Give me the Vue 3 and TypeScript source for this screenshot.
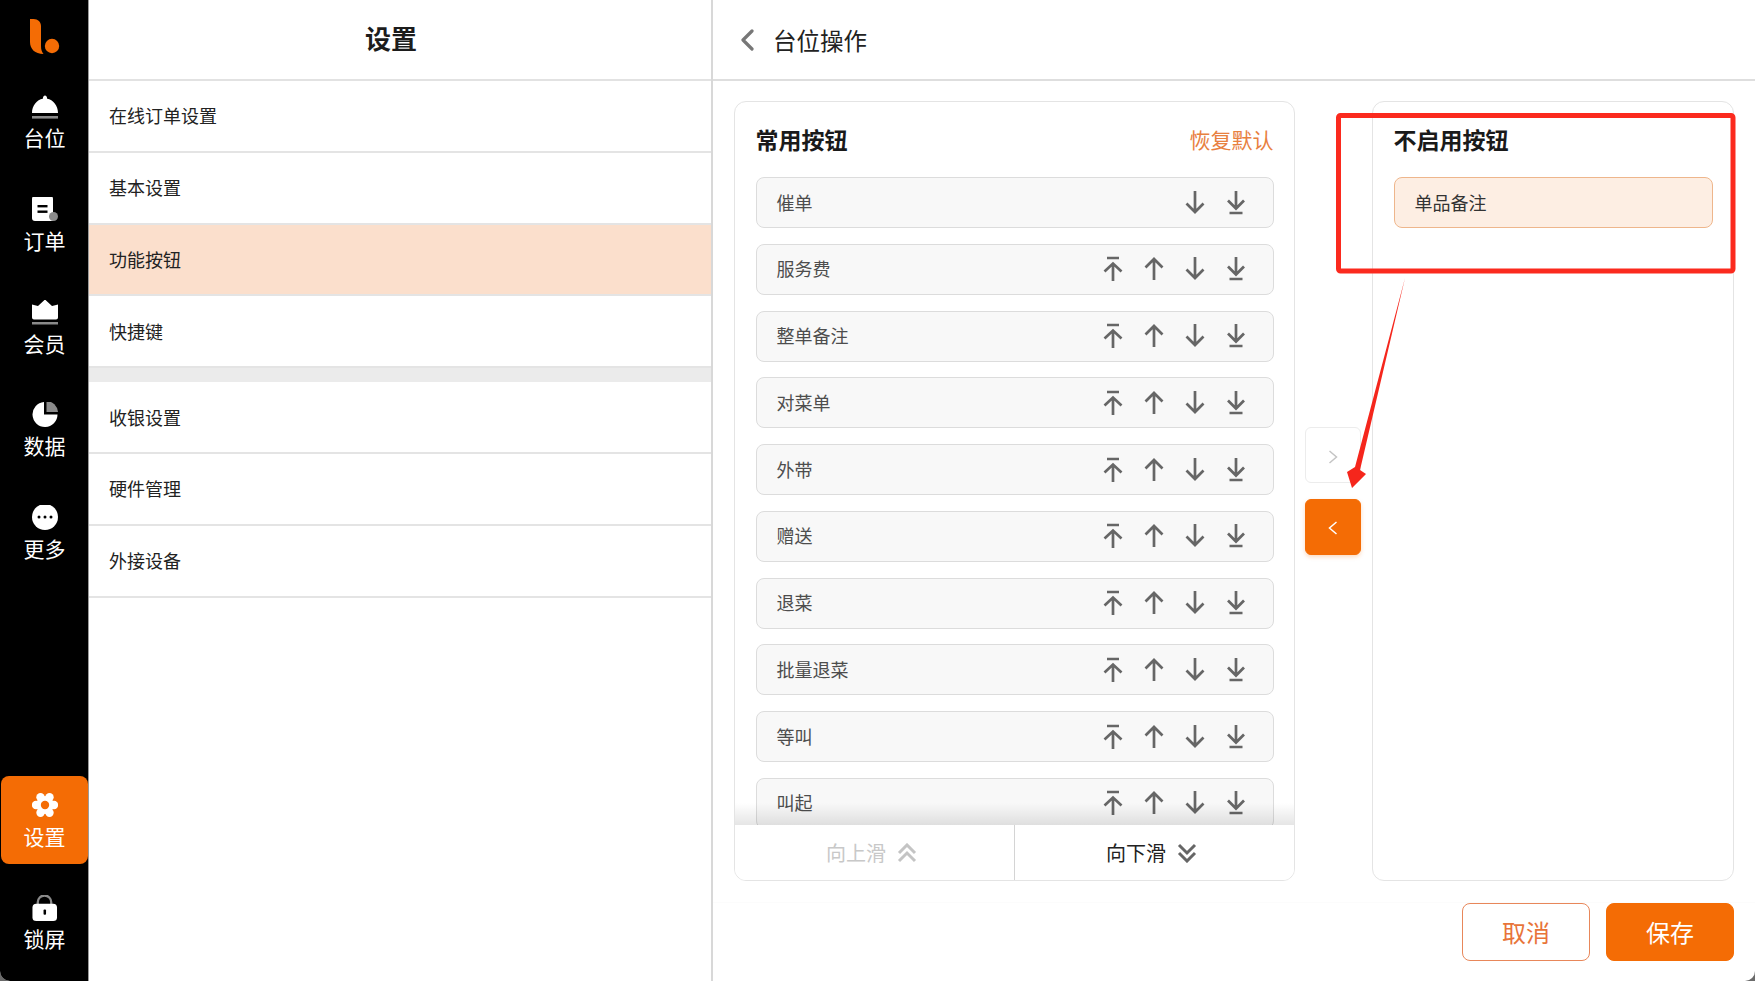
<script setup lang="ts">
const nav = ['bell', 'order', 'crown', 'pie', 'more'] as const
const navLabels: Record<string, string> = {
  bell: '台位', order: '订单', crown: '会员', pie: '数据', more: '更多', gear: '设置', lock: '锁屏'
}
const navBox: Record<string, string> = {
  bell: '0 0 26 26', order: '0 1 26 26', crown: '0 1.500 26 26', pie: '0 1.500 26 26', more: '0 1 26 26'
}
const menuA = ['在线订单设置', '基本设置', '功能按钮', '快捷键']
const menuB = ['收银设置', '硬件管理', '外接设备']
const rows = ['催单', '服务费', '整单备注', '对菜单', '外带', '赠送', '退菜', '批量退菜', '等叫', '叫起']
const lobes = [[22, 13], [17.500, 20.800], [8.500, 20.800], [4, 13], [8.500, 5.200], [17.500, 5.200]]
</script>

<template>
  <div class="app">
    <aside class="side">
      <div class="logo">
        <svg width="30" height="35" viewBox="0 0 30 35">
          <path d="M0 0h3.500C8 0 11 3 11 7v20c0 4 1 6 2.500 8C5 35 0 30 0 23z" fill="#f46c05" />
          <circle cx="22" cy="27" r="7.200" fill="#f46c05" />
        </svg>
      </div>
      <div class="nav-top">
        <div v-for="n in nav" :key="n" class="nav-item">
          <svg class="nav-icon" width="26" height="26" :viewBox="navBox[n]">
            <template v-if="n === 'bell'">
              <path d="M0 19C0 11.500 5 5.800 10.800 4.800 11 2.500 12 1.500 13 1.500s2 1 2.200 3.300C21 5.800 26 11.500 26 19z" fill="#fff" />
              <rect y="22" width="26" height="2.600" fill="#8a8a8a" />
            </template>
            <template v-else-if="n === 'order'">
              <path d="M3 0h15a3 3 0 0 1 3 3v22H3a3 3 0 0 1-3-3V3a3 3 0 0 1 3-3z" fill="#fff" />
              <circle cx="21.500" cy="20.500" r="4.500" fill="#8a8a8a" />
              <rect x="5.500" y="9" width="10" height="2.400" fill="#000" />
              <rect x="5.500" y="14.500" width="10" height="2.400" fill="#000" />
            </template>
            <template v-else-if="n === 'crown'">
              <path d="M0 6l6 1.500L13 1l7 6.500L26 6v13a2 2 0 0 1-2 2H2a2 2 0 0 1-2-2z" fill="#fff" />
              <rect y="23.500" width="26" height="2.500" fill="#8a8a8a" />
            </template>
            <template v-else-if="n === 'pie'">
              <path d="M12 1.500A12.500 12.500 0 1 0 25.500 14H12z" fill="#fff" />
              <path d="M14.500 0.500A12 12 0 0 1 26 11.500H14.500z" fill="#8a8a8a" />
            </template>
            <template v-else>
              <circle cx="13" cy="13" r="13" fill="#fff" />
              <circle cx="7" cy="13" r="1.500" fill="#000" />
              <circle cx="13" cy="13" r="1.500" fill="#000" />
              <circle cx="19" cy="13" r="1.500" fill="#000" />
            </template>
          </svg>
          <span class="nav-label">{{ navLabels[n] }}</span>
        </div>
      </div>
      <div class="nav-bottom">
        <div class="nav-item active">
          <svg class="nav-icon" width="26" height="26" viewBox="0 0 26 26">
            <circle v-for="(l, i) in lobes" :key="i" :cx="l[0]" :cy="l[1]" r="4.200" fill="#fff" />
            <circle cx="13" cy="13" r="9" fill="#fff" />
            <circle cx="13" cy="13" r="4.200" fill="#f46c05" />
          </svg>
          <span class="nav-label">{{ navLabels.gear }}</span>
        </div>
        <div class="nav-item">
          <svg class="nav-icon" width="27" height="26" viewBox="0 0 27 27">
            <path d="M6.500 11V7.500a7 7 0 0 1 14 0V11" fill="none" stroke="#8a8a8a" stroke-width="2.400" />
            <rect x="1" y="9" width="25.500" height="18" rx="4" fill="#fff" />
            <rect x="12.500" y="15" width="2.600" height="5.500" rx="1" fill="#000" />
          </svg>
          <span class="nav-label">{{ navLabels.lock }}</span>
        </div>
      </div>
    </aside>

    <section class="menu">
      <header class="menu-head">设置</header>
      <div v-for="(m, i) in menuA" :key="m" class="menu-row" :class="{ on: i === 2 }">{{ m }}</div>
      <div class="menu-gap"></div>
      <div v-for="m in menuB" :key="m" class="menu-row">{{ m }}</div>
    </section>

    <main class="detail">
      <header class="detail-head">
        <svg width="14" height="22" viewBox="0 0 14 22">
          <path d="M12 2L3 11l9 9" fill="none" stroke="#777" stroke-width="3.200" stroke-linecap="round" stroke-linejoin="round" />
        </svg>
        <span>台位操作</span>
      </header>
      <div class="columns">
        <section class="card used">
          <div class="card-title">
            <h2>常用按钮</h2>
            <span class="reset">恢复默认</span>
          </div>
          <div class="list">
            <div v-for="(r, i) in rows" :key="r" class="row">
              <span>{{ r }}</span>
              <div class="ops">
                <template v-if="i > 0">
                  <svg width="24" height="26" viewBox="0 0 24 26" class="op">
                    <path d="M6 3h12M12 26V9M3.500 16.500L12 8.500l8.500 8" />
                  </svg>
                  <svg width="24" height="26" viewBox="0 0 24 26" class="op">
                    <path d="M12 25V4M3.500 12.500L12 4l8.500 8.500" />
                  </svg>
                </template>
                <svg width="24" height="26" viewBox="0 0 24 26" class="op">
                  <path d="M12 2v21M3.500 14.500L12 23l8.500-8.500" />
                </svg>
                <svg width="24" height="26" viewBox="0 0 24 26" class="op">
                  <path d="M12 2v17M4 11.500l8 8 8-8M5.500 24h13" />
                </svg>
              </div>
            </div>
            <div class="fade"></div>
          </div>
          <div class="scroll-bar">
            <div class="scroll-btn off">
              <span>向上滑</span>
              <svg width="20" height="20" viewBox="0 0 20 20" class="chev">
                <path d="M2 10l8-8 8 8M2 18l8-8 8 8" />
              </svg>
            </div>
            <div class="scroll-btn">
              <span>向下滑</span>
              <svg width="20" height="20" viewBox="0 0 20 20" class="chev">
                <path d="M2 2l8 8 8-8M2 10l8 8 8-8" />
              </svg>
            </div>
          </div>
        </section>

        <div class="move">
          <button class="move-btn">
            <svg width="10" height="14" viewBox="0 0 10 14"><path d="M1.500 1L8.500 7l-7 6" fill="none" stroke="#c4c4c4" stroke-width="1.500" /></svg>
          </button>
          <button class="move-btn on">
            <svg width="10" height="14" viewBox="0 0 10 14"><path d="M8.500 1L1.500 7l7 6" fill="none" stroke="#fff" stroke-width="1.500" /></svg>
          </button>
        </div>

        <section class="card unused">
          <div class="card-title"><h2>不启用按钮</h2></div>
          <div class="picked">单品备注</div>
        </section>
      </div>
      <footer class="foot">
        <button class="btn ghost">取消</button>
        <button class="btn solid">保存</button>
      </footer>
    </main>

    <svg class="marks" width="1755" height="981" viewBox="0 0 1755 981">
      <rect x="1338.500" y="115.500" width="394.500" height="155.500" rx="2" fill="none" stroke="#fb2a1e" stroke-width="5" />
      <path d="M1405 278L1360 470L1366 474L1352 488L1347 472L1355 467Z" fill="#f5261c" />
    </svg>
  </div>
</template>

<style>
html, body { margin: 0; background: #6a6a6a; }
</style>

<style scoped>
.app {
  position: relative;
  display: flex;
  width: 1755px;
  height: 981px;
  overflow: hidden;
  border-radius: 0 0 10px 10px;
  background: #fff;
  font-family: "Noto Sans CJK SC", "Liberation Sans", sans-serif;
  color: #222;
}
.side {
  flex: 0 0 88px;
  display: flex;
  flex-direction: column;
  background: #000;
  color: #fff;
}
.logo {
  height: 78px;
  box-sizing: border-box;
  padding: 19px 0 0 30px;
}
.logo svg { display: block; }
.nav-top { display: flex; flex-direction: column; gap: 14.750px; }
.nav-bottom { margin-top: auto; display: flex; flex-direction: column; gap: 15px; padding-bottom: 14px; }
.nav-item {
  height: 88px;
  box-sizing: border-box;
  padding-top: 16px;
  display: flex;
  flex-direction: column;
  align-items: center;
  border-radius: 8px;
  margin-left: 1px;
}
.nav-item.active { background: #f46c05; }
.nav-icon { display: block; flex: none; }
.nav-label {
  font-size: 21px;
  line-height: 28px;
  margin-top: 3px;
}
.active .nav-label { margin-top: 4px; }
.menu {
  flex: 0 0 625px;
  border-left: 1px solid #9a9a9a;
  border-right: 2px solid #d8d8d8;
  box-sizing: border-box;
}
.menu-head {
  height: 81px;
  box-sizing: border-box;
  border-bottom: 2px solid #e2e2e2;
  display: flex;
  align-items: center;
  justify-content: center;
  font-size: 26px;
  font-weight: 700;
  color: #1c1c1c;
  padding: 0 18px 4px 0;
}
.menu-row {
  height: 71.800px;
  box-sizing: border-box;
  border-bottom: 2px solid #e4e4e4;
  display: flex;
  align-items: center;
  padding: 0 0 1px 20px;
  font-size: 18px;
}
.menu-row.on { background: #fbdfcc; }
.menu-gap { height: 14px; background: #ebebeb; }
.detail {
  flex: 1;
  min-width: 0;
  display: flex;
  flex-direction: column;
}
.detail-head {
  height: 81px;
  flex: none;
  box-sizing: border-box;
  border-bottom: 2px solid #dedede;
  display: flex;
  align-items: center;
  gap: 19px;
  padding: 0 0 0 27px;
  font-size: 23.500px;
  color: #222;
}
.detail-head svg { display: block; }
.columns {
  flex: 1;
  min-height: 0;
  display: flex;
  padding: 20px 21px 21px 21px;
}
.card {
  box-sizing: border-box;
  border: 1.500px solid #e4e4e4;
  border-radius: 12px;
  background: #fff;
  display: flex;
  flex-direction: column;
  overflow: hidden;
}
.used { width: 561px; }
.unused { width: 362px; }
.card-title {
  flex: none;
  height: 75px;
  box-sizing: border-box;
  padding: 0 20.500px 1px;
  display: flex;
  align-items: center;
  justify-content: space-between;
}
.card-title h2 {
  margin: 0;
  font-size: 23px;
  font-weight: 700;
  color: #1a1a1a;
}
.reset { font-size: 21px; color: #e8803f; }
.list {
  position: relative;
  flex: 1;
  min-height: 0;
  overflow: hidden;
  padding: 0 20.500px;
  display: flex;
  flex-direction: column;
  gap: 15.750px;
}
.row {
  flex: none;
  height: 51px;
  box-sizing: border-box;
  border: 1.500px solid #dcdcdc;
  border-radius: 8px;
  background: #f8f8f8;
  display: flex;
  align-items: center;
  justify-content: space-between;
  padding: 0 16px 0 20px;
  font-size: 18px;
  color: #4d4d4d;
}
.row > span { padding-bottom: 2px; }
.ops { display: flex; margin-top: -2px; }
.op {
  display: block;
  margin: 0 8.500px;
  fill: none;
  stroke: #666;
  stroke-width: 2.700;
}
.fade {
  position: absolute;
  left: 0;
  right: 0;
  bottom: 0;
  height: 22px;
  background: linear-gradient(rgba(0, 0, 0, 0), rgba(0, 0, 0, .1));
}
.scroll-bar {
  flex: none;
  height: 55px;
  display: flex;
  background: #fff;
}
.scroll-btn {
  flex: 1;
  display: flex;
  align-items: center;
  justify-content: center;
  gap: 11px;
  font-size: 20px;
  color: #222;
  padding-right: 6px;
}
.scroll-btn + .scroll-btn { border-left: 1.500px solid #d4d4d4; }
.scroll-btn.off { color: #c8c8c8; }
.chev { fill: none; stroke: #666; stroke-width: 3; display: block; }
.off .chev { stroke: #c4c4c4; }
.move {
  flex: none;
  width: 77px;
  box-sizing: border-box;
  padding-right: 1px;
  display: flex;
  flex-direction: column;
  align-items: center;
  justify-content: center;
  gap: 16px;
}
.move-btn {
  width: 56px;
  height: 56px;
  box-sizing: border-box;
  border: 1.500px solid #ececec;
  border-radius: 6px;
  background: #fff;
  padding: 2px 0 0;
  display: flex;
  align-items: center;
  justify-content: center;
}
.move-btn:first-child { padding-top: 4px; }
.move-btn.on {
  background: #f46c05;
  border-color: #f46c05;
  box-shadow: 0 2px 4px rgba(244, 108, 5, .25);
}
.picked {
  margin: 0 20.500px;
  height: 51px;
  box-sizing: border-box;
  border: 1.500px solid #eeb68c;
  border-radius: 8px;
  background: #fdeee3;
  display: flex;
  align-items: center;
  padding: 0 0 2px 20px;
  font-size: 18px;
  color: #333;
}
.foot {
  flex: none;
  height: 79px;
  box-sizing: border-box;
  border-top: 1px solid #fcfcfc;
  display: flex;
  justify-content: flex-end;
  gap: 16px;
  padding: 0 21px 20px 0;
}
.btn {
  width: 128px;
  height: 58px;
  box-sizing: border-box;
  border-radius: 8px;
  font-family: inherit;
  font-size: 24px;
  padding: 0 0 2px;
}
.ghost { background: #fff; border: 1.500px solid #e8875a; color: #e8743a; }
.solid { background: #f46c05; border: 1.500px solid #f46c05; color: #fff; }
.marks {
  position: absolute;
  left: 0;
  top: 0;
  pointer-events: none;
}
</style>
